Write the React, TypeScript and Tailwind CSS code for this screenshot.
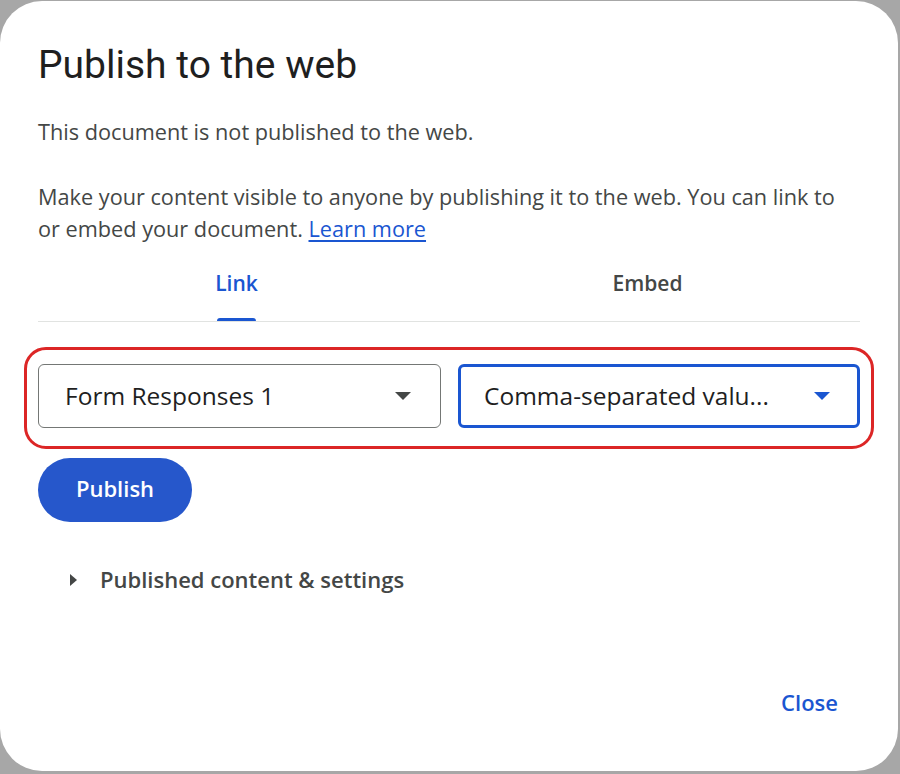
import React from 'react';

const sans = { fontFamily: '"Open Sans", "Noto Sans", sans-serif' };
const title = { fontFamily: 'Roboto, "Noto Sans", sans-serif' };

const Caret: React.FC<{ className?: string }> = ({ className }) => (
  <svg width="16" height="8" viewBox="0 0 16 8" className={className}>
    <path d="M0 0h16L8 8z" fill="currentColor" />
  </svg>
);

export default function App() {
  return (
    <div className="min-h-screen bg-[#a7a7a7] pt-px" style={sans}>
      <div className="w-[898px] h-[770px] bg-white rounded-[42px] flex flex-col px-[38px]">
        <h1 className="mt-[40px] text-[39px] leading-[48px] text-[#1f1f1f] font-normal" style={title}>
          Publish to the web
        </h1>

        <p className="mt-[27px] text-[21.7px] leading-[32px] text-[#444746]">
          This document is not published to the web.
        </p>
        <p className="mt-[33px] text-[21.7px] leading-[32px] text-[#444746]">
          Make your content visible to anyone by publishing it to the web. You can link to
          <br />
          or embed your document.{' '}
          <a href="#" className="text-[#1a56d1] underline underline-offset-[3px]">Learn more</a>
        </p>

        {/* tabs */}
        <div className="mt-[24px]">
          <div className="flex -ml-[7px] mr-[7px]">
            <button className="flex-1 flex flex-col items-center">
              <span className="text-[21px] leading-[28px] font-semibold text-[#1a56d1]">Link</span>
              <span className="mt-[21px] w-[39px] h-[3px] rounded-t-[3px] bg-[#1a56d1]" />
            </button>
            <button className="flex-1 flex flex-col items-center">
              <span className="text-[21px] leading-[28px] font-semibold text-[#444746]">Embed</span>
              <span className="mt-[21px] h-[3px]" />
            </button>
          </div>
          <div className="h-px bg-[#e1e3e1]" />
        </div>

        {/* selects */}
        <div className="mt-[25px] -mx-[14px] border-[3px] border-[#dc2626] rounded-[22px] pt-[14px] pb-[18px] px-[11px] flex gap-[17px]">
          <div className="flex-1 h-[64px] border border-[#747775] rounded-[6px] flex items-center pl-[26px] pr-[29px]">
            <span className="flex-1 text-[24.5px] text-[#1f1f1f]">Form Responses 1</span>
            <Caret className="text-[#444746]" />
          </div>
          <div className="flex-1 h-[64px] border-[3px] border-[#1a56d1] rounded-[6px] flex items-center pl-[23px] pr-[27px]">
            <span className="flex-1 text-[24.5px] text-[#1f1f1f]">Comma-separated valu...</span>
            <Caret className="text-[#1a56d1]" />
          </div>
        </div>

        <button className="mt-[9px] w-[154px] h-[64px] pb-[3px] rounded-full bg-[#2657cb] text-white text-[22px] font-semibold">
          Publish
        </button>

        <div className="mt-[43px] flex items-center text-[#444746]">
          <svg width="7" height="12" viewBox="0 0 7 12" className="ml-[32px] mt-px">
            <path d="M0 0l7 6-7 6z" fill="currentColor" />
          </svg>
          <span className="ml-[23px] text-[22px] leading-[28px] font-semibold">Published content &amp; settings</span>
        </div>

        <div className="mt-[95px] flex justify-end pr-[22px]">
          <button className="text-[22px] leading-[28px] font-semibold text-[#1a56d1]">Close</button>
        </div>
      </div>
    </div>
  );
}
